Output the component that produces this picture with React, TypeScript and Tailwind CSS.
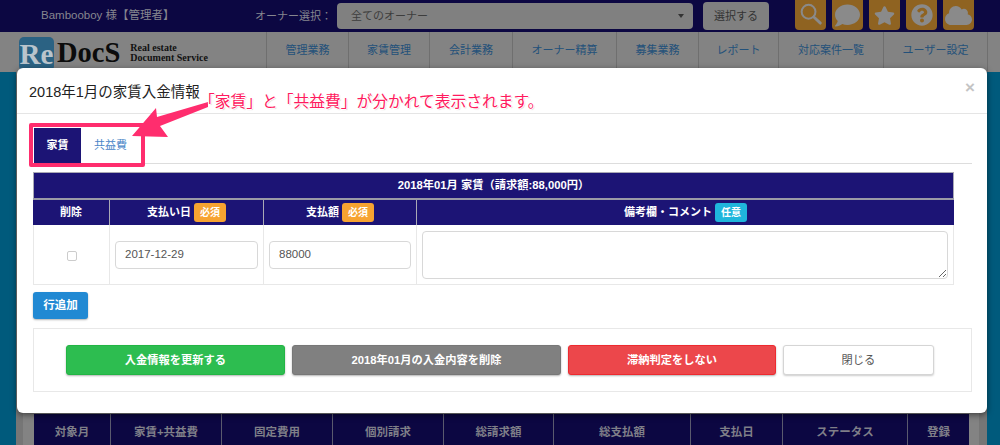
import { FaCloud, FaComment, FaQuestionCircle, FaStar } from 'react-icons/fa';

const navItems = [
  { label: '管理業務', width: 'w-[82px]' },
  { label: '家賃管理', width: 'w-[81px]' },
  { label: '会計業務', width: 'w-[83px]' },
  { label: 'オーナー精算', width: 'w-[104px]' },
  { label: '募集業務', width: 'w-[82px]' },
  { label: 'レポート', width: 'w-[80px]' },
  { label: '対応案件一覧', width: 'w-[105px]' },
  { label: 'ユーザー設定', width: 'w-[104px]' },
];

const backColumns = [
  { label: '対象月', width: 'w-[77px]' },
  { label: '家賃+共益費', width: 'w-[111px]' },
  { label: '固定費用', width: 'w-[111px]' },
  { label: '個別請求', width: 'w-[111px]' },
  { label: '総請求額', width: 'w-[110px]' },
  { label: '総支払額', width: 'w-[137px]' },
  { label: '支払日', width: 'w-[92px]' },
  { label: 'ステータス', width: 'w-[125px]' },
  { label: '登録', width: 'w-[61px]' },
];

function SearchIcon() {
  return (
    <svg viewBox="0 0 32 32" className="w-[26px] h-[26px]" fill="none" stroke="#8a8a8a">
      <circle cx="13" cy="12" r="8.5" strokeWidth="2.5" />
      <path d="M19.5 18.5 L27.5 26" strokeWidth="3.5" strokeLinecap="round" />
    </svg>
  );
}

function HeaderIcon({ children }: { children: React.ReactNode }) {
  return (
    <div className="w-[31px] h-[30px] rounded-b-[4px] bg-[#8f6321] flex items-center justify-center text-[#8a8a8a]">
      {children}
    </div>
  );
}

function Badge({ label, color }: { label: string; color: string }) {
  return (
    <span className={`ml-[3px] px-[6px] h-[19px] leading-[19px] rounded-[3px] text-[10px] font-bold text-white ${color}`}>
      {label}
    </span>
  );
}

function HeadCell({ children }: { children: React.ReactNode }) {
  return (
    <div className="bg-[#1c1475] h-[25px] flex items-center justify-center text-[11px] font-bold text-white">
      {children}
    </div>
  );
}

export default function App() {
  return (
    <div
      className="relative w-[1000px] h-[445px] overflow-hidden flex flex-col bg-[#005a7c]"
      style={{ fontFamily: '"Liberation Sans", "Noto Sans CJK JP", sans-serif' }}
    >
      {/* dimmed page behind the modal */}
      <div className="h-[32px] bg-[#0c0742] flex items-center shrink-0">
        <span className="ml-[41px] w-[214px] text-[11.5px] text-[#86868f]">Bambooboy 様【管理者】</span>
        <span className="w-[82px] text-[11px] text-[#86868f] whitespace-nowrap">オーナー選択：</span>
        <div className="w-[356px] h-[26px] rounded-[4px] bg-[#808080] flex items-center justify-between pl-[14px] pr-[9px] text-[11px] text-[#3d3d3d]">
          全てのオーナー
          <span className="w-0 h-0 border-x-[3.5px] border-x-transparent border-t-[4px] border-t-[#333]" />
        </div>
        <div className="ml-[10px] w-[66px] h-[28px] rounded-[4px] bg-[#808080] flex items-center justify-center text-[11px] text-[#333]">
          選択する
        </div>
        <div className="ml-[26px] flex gap-[6px] self-start">
          <HeaderIcon><SearchIcon /></HeaderIcon>
          <HeaderIcon><FaComment className="w-[25px] h-[25px]" /></HeaderIcon>
          <HeaderIcon><FaStar className="w-[21px] h-[21px]" /></HeaderIcon>
          <HeaderIcon><FaQuestionCircle className="w-[22px] h-[22px]" /></HeaderIcon>
          <HeaderIcon><FaCloud className="w-[27px] h-[27px]" /></HeaderIcon>
        </div>
      </div>

      <div className="h-[40px] bg-[#838383] flex shrink-0">
        <div className="w-[266px] pl-[19px] pt-[5px] flex items-start" style={{ fontFamily: '"Liberation Serif", serif' }}>
          <div className="w-[35px] h-[34px] rounded-[5px] bg-[#2b6283] text-[#b9c4cc] text-[29px] font-bold flex items-center justify-center leading-none">
            Re
          </div>
          <span className="ml-[3px] mt-[2px] text-[28.5px] leading-[28px] font-bold text-[#0b0b0b]">DocS</span>
          <div className="ml-[10px] mt-[6px] text-[10px] leading-[10px] font-bold text-[#111] whitespace-nowrap">
            Real estate
            <br />
            Document Service
          </div>
        </div>
        {navItems.map(item => (
          <div
            key={item.label}
            className={`${item.width} border-l border-[#6f6f6f] pb-[4px] flex items-center justify-center text-[11px] text-[#23517a]`}
          >
            {item.label}
          </div>
        ))}
        <div className="flex-1 border-l border-[#6f6f6f]" />
      </div>

      <div className="flex-1 ml-[16px] mr-[13px] bg-[#767676] flex flex-col justify-end">
        <div className="ml-[7px] mr-[8px] flex-1 bg-[#838383] flex flex-col justify-end pl-[11px] pr-[10px]">
          <div className="h-[31px] bg-[#0c0742] flex">
            {backColumns.map(col => (
              <div
                key={col.label}
                className={`${col.width} border-r border-[#5a5a6e] last:border-r-0 pt-[7px] flex items-center justify-center text-[11.5px] font-bold text-[#7f7f88]`}
              >
                {col.label}
              </div>
            ))}
          </div>
        </div>
      </div>

      {/* modal */}
      <div className="absolute left-[17px] top-[68px] w-[970px] h-[345px] bg-white rounded-[6px] shadow-[0_2px_6px_rgba(0,0,0,0.5)]">
        <div className="relative h-[46px] border-b border-[#e5e5e5] pl-[12px] pt-[14px] text-[14.5px] leading-[20px] text-[#222]">
          2018年1月の家賃入金情報
          <span className="absolute right-[12px] top-[10px] text-[17px] leading-[20px] font-bold text-[#c4c4c4]">×</span>
        </div>

        <div className="pt-[14px] pl-[16px] pr-[15px]">
          <div className="h-[36px] border-b border-[#dddddd] flex">
            <div className="ml-px w-[47px] h-[35px] bg-[#1c1475] flex items-center justify-center text-[11px] font-bold text-white">
              家賃
            </div>
            <div className="w-[59px] h-[35px] flex items-center justify-center text-[11px] text-[#4a86c8]">
              共益費
            </div>
          </div>

          <div className="mt-[8px] w-[921px]">
            <div className="h-[26px] bg-[#1c1475] border border-[#a9a9b5] border-b-0 flex items-center justify-center text-[11.25px] font-bold text-white">
              2018年01月 家賃（請求額:88,000円）
            </div>
            <div className="h-[2px] bg-[#9a9aa6]" />
            <div className="grid grid-cols-[76px_153px_152px_1fr] gap-x-px bg-[#a9a9b5]">
              <HeadCell>削除</HeadCell>
              <HeadCell>支払い日<Badge label="必須" color="bg-[#f7a331]" /></HeadCell>
              <HeadCell>支払額<Badge label="必須" color="bg-[#f7a331]" /></HeadCell>
              <HeadCell>備考欄・コメント<Badge label="任意" color="bg-[#1fb6dc]" /></HeadCell>
            </div>
            <div className="h-[60px] grid grid-cols-[75px_153px_152px_1fr] gap-x-px bg-[#e8e8e8] border border-t-0 border-[#e8e8e8]">
              <div className="bg-white flex items-center justify-center">
                <span className="mt-[2px] w-[10px] h-[10px] rounded-[2px] border border-[#cccccc]" />
              </div>
              <div className="bg-white flex items-center px-[5px]">
                <div className="w-full h-[28px] rounded-[4px] border border-[#d8d8d8] pl-[9px] flex items-center text-[11.5px] text-[#555]">
                  2017-12-29
                </div>
              </div>
              <div className="bg-white flex items-center px-[5px]">
                <div className="w-full h-[28px] rounded-[4px] border border-[#d8d8d8] pl-[9px] flex items-center text-[11.5px] text-[#555]">
                  88000
                </div>
              </div>
              <div className="bg-white flex items-center px-[5px]">
                <textarea
                  readOnly
                  className="w-full h-[48px] rounded-[4px] border border-[#d8d8d8] outline-none"
                />
              </div>
            </div>
          </div>

          <button className="mt-[7px] w-[55px] h-[27px] rounded-[3px] bg-[#2189d3] shadow-[0_1px_2px_rgba(0,0,0,0.3)] text-[11.5px] font-bold text-white">
            行追加
          </button>

          <div className="mt-[9px] h-[64px] border border-[#e8e8e8] flex items-center pl-[32px] gap-[7px] text-[11.25px] font-bold">
            <button className="w-[219px] h-[30px] rounded-[3px] bg-[#2dbd50] border border-[#22b544] shadow-[0_1px_2px_rgba(0,0,0,0.3)] text-white">
              入金情報を更新する
            </button>
            <button className="w-[269px] h-[30px] rounded-[3px] bg-[#808080] border border-[#777] shadow-[0_1px_2px_rgba(0,0,0,0.3)] text-white">
              2018年01月の入金内容を削除
            </button>
            <button className="w-[208px] h-[30px] rounded-[3px] bg-[#ec474b] border border-[#ee2a2f] shadow-[0_1px_2px_rgba(0,0,0,0.3)] text-white">
              滞納判定をしない
            </button>
            <button className="w-[151px] h-[30px] rounded-[3px] bg-white border border-[#d5d5d5] shadow-[0_1px_2px_rgba(0,0,0,0.2)] font-normal text-[#555]">
              閉じる
            </button>
          </div>
        </div>
      </div>

      {/* annotation */}
      <div className="absolute left-[29px] top-[123px] w-[116px] h-[44px] border-[4px] border-[#ff2d6e] rounded-[2px]" />
      <svg className="absolute left-0 top-0 w-[1000px] h-[445px] pointer-events-none" viewBox="0 0 1000 445">
        <polygon points="208,102 157,117 156,108 132,136 168,137 160,126 208,107" fill="#ff2d6e" />
      </svg>
      <div
        className="absolute left-[199px] top-[92px] text-[15.75px] leading-[20px] text-[#ff1a5e] whitespace-nowrap"
        style={{ textShadow: '1px 0 0 #fff, -1px 0 0 #fff, 0 1px 0 #fff, 0 -1px 0 #fff, 1px 1px 1px #ccc' }}
      >
        「家賃」と「共益費」が分かれて表示されます。
      </div>
    </div>
  );
}
